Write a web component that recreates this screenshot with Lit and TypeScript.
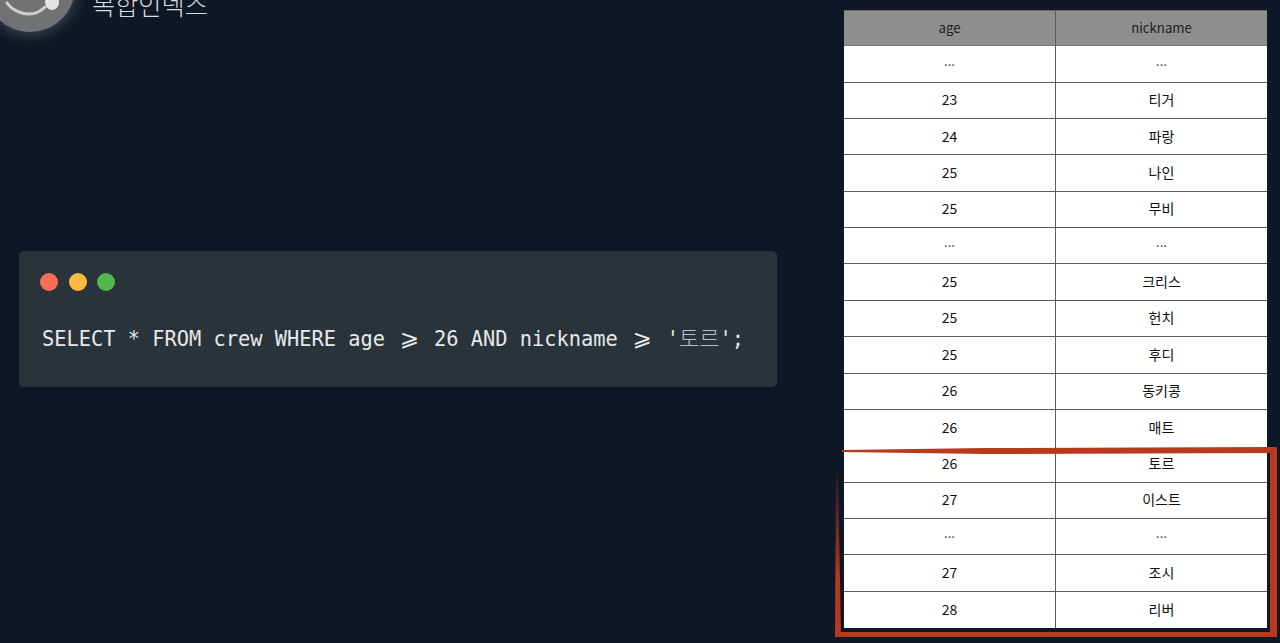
import { LitElement, html, css, svg } from "lit";
import { customElement } from "lit/decorators.js";

const ROWS: [string, string][] = [
  ["...", "..."], ["23", "티거"], ["24", "파랑"], ["25", "나인"], ["25", "무비"],
  ["...", "..."], ["25", "크리스"], ["25", "헌치"], ["25", "후디"], ["26", "동키콩"],
  ["26", "매트"], ["26", "토르"], ["27", "이스트"], ["...", "..."], ["27", "조시"], ["28", "리버"],
];

@customElement("app-root")
export class AppRoot extends LitElement {
  static styles = css`
    :host {
      display: block;
      position: relative;
      width: 1280px;
      height: 643px;
      overflow: hidden;
      background: #0f1726;
      font-family: "Noto Sans CJK KR", "Noto Sans", sans-serif;
    }
    .page {
      display: flex;
      justify-content: space-between;
      height: 100%;
      padding: 10px 13px 0 19px;
      box-sizing: border-box;
    }
    .left { width: 758px; display: flex; flex-direction: column; }
    .brand {
      display: flex;
      align-items: flex-start;
      height: 251px;
      margin: -10px 0 0 -19px;
      overflow: hidden;
    }
    .logo { width: 92px; height: 64px; flex: none; display: block; }
    .title {
      margin-top: -11px;
      font-size: 25.2px;
      line-height: 30px;
      color: #d9dcdf;
      font-weight: 300;
    }
    .card {
      height: 136px;
      box-sizing: border-box;
      background: #2a333a;
      border-radius: 5px;
      padding: 22px 21px 0;
    }
    .dots { display: flex; gap: 10.5px; }
    .dot { width: 18px; height: 18px; border-radius: 50%; }
    .red { background: #f96d58; }
    .yellow { background: #fdb93e; }
    .green { background: #52b64c; }
    .code {
      margin: 33px 0 0 2px;
      font-family: "DejaVu Sans Mono", "Noto Sans CJK KR", monospace;
      font-size: 20.35px;
      line-height: 30px;
      color: #e6e9ea;
      white-space: pre;
    }
    .ge {
      display: inline-block;
      width: 24.5px;
      text-align: center;
      font-family: "DejaVu Sans", monospace;
      font-size: 23px;
      line-height: 20px;
    }
    .ko { font-family: "Noto Sans CJK KR", sans-serif; font-size: 22px; line-height: 20px; color: #b9bfc1; font-weight: 300; }
    .table {
      width: 423px;
      height: 618px;
      display: grid;
      grid-template-columns: 212px 1fr;
      grid-auto-rows: 1fr;
      background: #fff;
      color: #111;
      font-size: 14px;
    }
    .cell {
      display: flex;
      align-items: center;
      justify-content: center;
      border-bottom: 1px solid #5c5c5c;
      box-sizing: border-box;
      min-height: 0;
      line-height: 1;
      padding-bottom: 2px;
    }
    .cell.c1 { border-right: 1px solid #5c5c5c; }
    .cell.noline { border-bottom: none; }
    .cell.head { background: #8f8f8f; color: #1c1c1c; font-size: 13.2px; border-bottom-color: #777; border-top: 1px solid #6a6a6a; padding-bottom: 2px; }
    .cell.dots3 { padding-bottom: 8px; font-size: 13px; color: #333; }
    .highlight { position: absolute; left: 0; top: 0; width: 1280px; height: 643px; pointer-events: none; }
  `;

  render() {
    const ge = html`<span class="ge">⩾</span>`;
    return html`
      <div class="page">
        <div class="left">
          <div class="brand">
            <svg class="logo" viewBox="0 0 92 64">
              <defs>
                <radialGradient id="glow" gradientUnits="userSpaceOnUse" cx="30" cy="-13" r="62">
                  <stop offset="0.7" stop-color="#8a8d90" stop-opacity="0.3"></stop>
                  <stop offset="1" stop-color="#0f1726" stop-opacity="0"></stop>
                </radialGradient>
              </defs>
              <circle cx="30" cy="-13" r="62" fill="url(#glow)"></circle>
              <circle cx="30" cy="-13" r="45" fill="#707274"></circle>
              <path d="M7 3 C12 10 21 14 29 14 C36 14 41 11 45 7" fill="none" stroke="#cfcfcf" stroke-width="3" stroke-linecap="round"></path>
              <ellipse cx="52" cy="2" rx="7" ry="8" fill="#e4e4e4"></ellipse>
            </svg>
            <div class="title">복합인덱스</div>
          </div>
          <div class="card">
            <div class="dots">
              <div class="dot red"></div>
              <div class="dot yellow"></div>
              <div class="dot green"></div>
            </div>
            <div class="code">SELECT * FROM crew WHERE age ${ge} 26 AND nickname ${ge} '<span class="ko">토르</span>';</div>
          </div>
        </div>
        <div class="table">
          <div class="cell head c1">age</div>
          <div class="cell head">nickname</div>
          ${ROWS.map((r, i) => {
            const line = i === ROWS.length - 1 || i === 10 ? "noline" : "";
            const d = r[0] === "..." ? "dots3" : "";
            return html`
              <div class="cell c1 ${line} ${d}">${r[0]}</div>
              <div class="cell ${line} ${d}">${r[1]}</div>
            `;
          })}
        </div>
      </div>
      <svg class="highlight" viewBox="0 0 1280 643">
        ${svg`
          <defs>
            <linearGradient id="fade" x1="0" y1="473" x2="0" y2="637" gradientUnits="userSpaceOnUse">
              <stop offset="0" stop-color="#b83a1c" stop-opacity="0.1"></stop>
              <stop offset="0.65" stop-color="#b83a1c"></stop>
            </linearGradient>
          </defs>
          <path d="M842 450 L985 448 L1277 447 L1277 637 L841 637 L841 632 L1270 632 L1270 453 L985 454 L842 452 Z" fill="#b83a1c"></path>
          <path d="M836 473 L838 473 L841 637 L835 637 Z" fill="url(#fade)"></path>
        `}
      </svg>
    `;
  }
}
